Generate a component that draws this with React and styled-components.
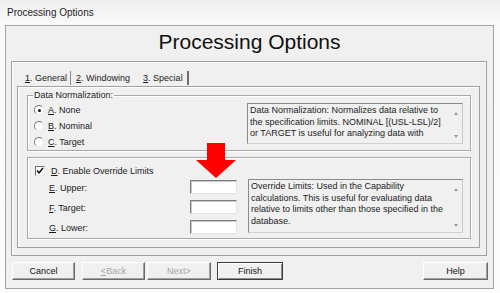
import React from "react";
import styled, { createGlobalStyle } from "styled-components";

const GlobalStyle = createGlobalStyle`
  html, body {
    margin: 0;
    padding: 0;
    background: #fbfbfb;
  }
  body {
    font-family: "Liberation Sans", Arial, sans-serif;
    color: #1a1a1a;
  }
`;

const Frame = styled.div`
  position: relative;
  width: 500px;
  height: 293px;
  display: flex;
  flex-direction: column;
  background: linear-gradient(180deg, #efefef 0%, #f9f9f9 8%, #fcfcfc 100%);
  overflow: hidden;
`;

const TitleBar = styled.div`
  height: 25px;
  padding-left: 7px;
  font-size: 10px;
  line-height: 26px;
  color: #1e1e1e;
`;

const Client = styled.div`
  box-sizing: border-box;
  height: 264px;
  margin: 0 6px 0 5px;
  border: 1px solid #a3a3a3;
  background: #f0f0f0;
  display: flex;
  flex-direction: column;
`;

const Header = styled.div`
  height: 35px;
  line-height: 31px;
  text-align: center;
  font-size: 21px;
  color: #111;
`;

const Panel = styled.div`
  box-sizing: border-box;
  height: 195px;
  margin: 0 6px 0 5px;
  padding: 6px 6px 7px 5px;
  border: 1px solid #a0a0a0;
  box-shadow: inset 1px 1px 0 #fff;
  display: flex;
  flex-direction: column;
`;

const TabStrip = styled.div`
  height: 18px;
  display: flex;
  padding-left: 3px;
`;

const Tab = styled.div`
  display: flex;
  align-items: center;
  padding: 0 ${(p) => p.$pr}px 0 5px;
  font-size: 9px;
  border-right: ${(p) =>
    p.$active ? "2px solid #6e6e6e" : p.$sep ? "1px solid #8a8a8a" : "1px solid transparent"};
  margin: 3px 0 1px;
  white-space: nowrap;
`;

const TabPage = styled.div`
  flex: 1;
  border: 1px solid #a0a0a0;
  box-shadow: inset 1px 1px 0 #fff;
  padding: 3px 8px 0 9px;
`;

const GroupBox = styled.fieldset`
  margin: ${(p) => p.$mt || 0}px 0 0;
  padding: 0;
  min-width: 0;
  border: 1px solid #a8a8a8;
  box-shadow: 1px 1px 0 #fff, inset 1px 1px 0 #fff;
  display: flex;
`;

const Legend = styled.legend`
  height: 11px;
  line-height: 11px;
  font-size: 9px;
  padding: 0 1px;
  margin-left: 5px;
`;

const GroupBody = styled.div`
  flex: 1;
  display: flex;
  height: ${(p) => p.$h}px;
  padding-top: ${(p) => p.$pt || 0}px;
`;

const OptionList = styled.div`
  flex: 1;
  display: flex;
  flex-direction: column;
  padding-left: ${(p) => p.$pl}px;
  padding-top: ${(p) => p.$pt || 0}px;
`;

const OptionRow = styled.label`
  height: 16px;
  display: flex;
  align-items: center;
  gap: 4px;
  font-size: 9px;
`;

const Radio = styled.span`
  box-sizing: border-box;
  width: 10px;
  height: 10px;
  border-radius: 50%;
  border: 1px solid;
  border-color: #7a7a7a #e6e6e6 #e6e6e6 #7a7a7a;
  background: #fff;
  display: flex;
  align-items: center;
  justify-content: center;
  &::after {
    content: "";
    width: 3px;
    height: 3px;
    border-radius: 50%;
    background: ${(p) => (p.$checked ? "#111" : "transparent")};
  }
`;

const CheckRow = styled.label`
  height: 12px;
  display: flex;
  align-items: center;
  gap: 6px;
  font-size: 9px;
`;

const CheckBox = styled.span`
  box-sizing: border-box;
  width: 10px;
  height: 10px;
  border: 1px solid;
  border-color: #6e6e6e #e6e6e6 #e6e6e6 #6e6e6e;
  background: #fff;
  display: flex;
  align-items: center;
  justify-content: center;
`;

const FieldRow = styled.div`
  height: 20px;
  display: flex;
  align-items: center;
  padding-left: 14px;
  font-size: 9px;
`;

const FieldLabel = styled.span`
  width: 141px;
  padding-top: 2px;
`;

const TextInput = styled.div`
  box-sizing: border-box;
  width: 47px;
  height: 14px;
  background: #fff;
  border: 1px solid;
  border-color: #7c7c7c #e4e4e4 #e4e4e4 #7c7c7c;
  box-shadow: inset 1px 1px 0 #c8c8c8;
`;

const InfoBox = styled.div`
  box-sizing: border-box;
  width: ${(p) => p.$w}px;
  height: ${(p) => p.$h}px;
  margin: ${(p) => p.$mt}px 7px 0 0;
  border: 1px solid;
  border-color: #8a8a8a #c9c9c9 #d0d0d0 #8a8a8a;
  background: #f0f0f0;
  display: flex;
  overflow: hidden;
`;

const InfoText = styled.div`
  flex: 1;
  padding: 1px 0 0 2px;
  font-size: 9px;
  line-height: 11.6px;
  white-space: nowrap;
  color: #1c1c1c;
`;

const ScrollCol = styled.div`
  width: 12px;
  display: flex;
  flex-direction: column;
  align-items: center;
  justify-content: space-between;
  padding: 8px 0 5px;
`;

const Arrow = styled.span`
  width: 0;
  height: 0;
  border-left: 2.5px solid transparent;
  border-right: 2.5px solid transparent;
  ${(p) => (p.$up ? "border-bottom" : "border-top")}: 3px solid #9a9a9a;
`;

const ButtonRow = styled.div`
  display: flex;
  margin-top: 6px;
  padding: 0 5px 0 6px;
`;

const Button = styled.div`
  box-sizing: border-box;
  width: ${(p) => p.$w}px;
  height: 18px;
  margin-left: ${(p) => (p.$ml === "auto" ? "auto" : `${p.$ml || 0}px`)};
  display: flex;
  align-items: center;
  justify-content: center;
  font-size: 9px;
  color: ${(p) => (p.$disabled ? "#a6a6a6" : "#111")};
  background: #f0f0f0;
  border: 1px solid;
  border-color: ${(p) =>
    p.$default ? "#3a3a3a" : "#ffffff #6a6a6a #6a6a6a #ffffff"};
  box-shadow: ${(p) =>
    p.$default
      ? "inset 1px 1px 0 #fff, inset -1px -1px 0 #8a8a8a"
      : "inset -1px -1px 0 #a0a0a0"};
`;

const Marker = styled.svg`
  position: absolute;
  left: 196px;
  top: 143px;
`;

function Info({ lines, w, h, mt }) {
  return (
    <InfoBox $w={w} $h={h} $mt={mt}>
      <InfoText>
        {lines.map((l) => (
          <div key={l}>{l}</div>
        ))}
      </InfoText>
      <ScrollCol>
        <Arrow $up />
        <Arrow />
      </ScrollCol>
    </InfoBox>
  );
}

export default function App() {
  return (
    <>
      <GlobalStyle />
      <Frame>
        <TitleBar>Processing Options</TitleBar>
        <Client>
          <Header>Processing Options</Header>
          <Panel>
            <TabStrip>
              <Tab $sep $pr={3}>
                <u>1</u>. General
              </Tab>
              <Tab $pr={7}>
                <u>2</u>. Windowing
              </Tab>
              <Tab $active $pr={4}>
                <u>3</u>. Special
              </Tab>
            </TabStrip>
            <TabPage>
              <GroupBox>
                <Legend>Data Normalization:</Legend>
                <GroupBody $h={48} $pt={1}>
                  <OptionList $pl={6}>
                    <OptionRow>
                      <Radio $checked />
                      <span>
                        <u>A</u>. None
                      </span>
                    </OptionRow>
                    <OptionRow>
                      <Radio />
                      <span>
                        <u>B</u>. Nominal
                      </span>
                    </OptionRow>
                    <OptionRow>
                      <Radio />
                      <span>
                        <u>C</u>. Target
                      </span>
                    </OptionRow>
                  </OptionList>
                  <Info
                    w={216}
                    h={41}
                    mt={1}
                    lines={[
                      "Data Normalization: Normalizes data relative to",
                      "the specification limits. NOMINAL [(USL-LSL)/2]",
                      "or TARGET is useful for analyzing data with",
                    ]}
                  />
                </GroupBody>
              </GroupBox>
              <GroupBox $mt={6}>
                <GroupBody $h={80}>
                  <OptionList $pl={7} $pt={7}>
                    <CheckRow>
                      <CheckBox>
                        <svg width="8" height="8" viewBox="0 0 8 8">
                          <path d="M1 3.5 L3 5.8 L7 1" fill="none" stroke="#111" strokeWidth="1.5" />
                        </svg>
                      </CheckBox>
                      <span>
                        <u>D</u>. Enable Override Limits
                      </span>
                    </CheckRow>
                    <FieldRow>
                      <FieldLabel>
                        <u>E</u>. Upper:
                      </FieldLabel>
                      <TextInput />
                    </FieldRow>
                    <FieldRow>
                      <FieldLabel>
                        <u>F</u>. Target:
                      </FieldLabel>
                      <TextInput />
                    </FieldRow>
                    <FieldRow>
                      <FieldLabel>
                        <u>G</u>. Lower:
                      </FieldLabel>
                      <TextInput />
                    </FieldRow>
                  </OptionList>
                  <Info
                    w={215}
                    h={54}
                    mt={21}
                    lines={[
                      "Override Limits: Used in the Capability",
                      "calculations. This is useful for evaluating data",
                      "relative to limits other than those specified in the",
                      "database.",
                    ]}
                  />
                </GroupBody>
              </GroupBox>
            </TabPage>
          </Panel>
          <ButtonRow>
            <Button $w={63}>Cancel</Button>
            <Button $w={63} $ml={7} $disabled>
              <u>&lt;</u>Back
            </Button>
            <Button $w={64} $ml={2} $disabled>
              Next&gt;
            </Button>
            <Button $w={66} $ml={6} $default>
              Finish
            </Button>
            <Button $w={65} $ml="auto">
              Help
            </Button>
          </ButtonRow>
        </Client>
        <Marker width="41" height="36" viewBox="0 0 41 36">
          <polygon points="11,0 29,0 29,17 40,17 20,35 0,17 11,17" fill="#ff0000" />
        </Marker>
      </Frame>
    </>
  );
}
